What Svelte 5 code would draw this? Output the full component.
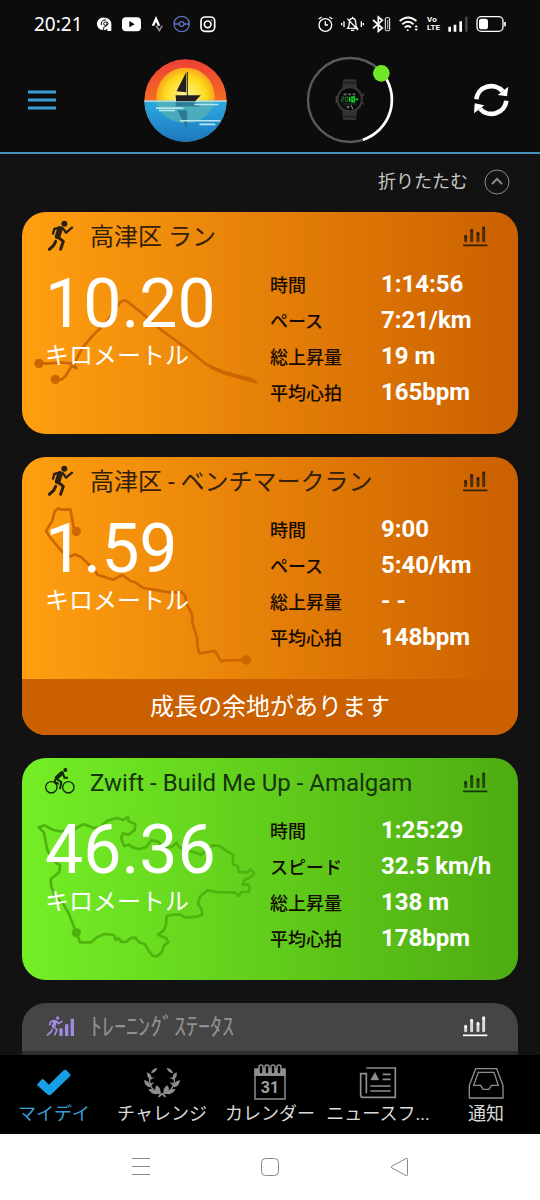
<script lang="ts">
	type Activity = {
		sport: 'run' | 'ride';
		title: string;
		distance: string;
		unit: string;
		stats: [string, string][];
		routeBox: string;
		route: string[];
		dots: [number, number][];
		note?: string;
	};

	const activities: Activity[] = [
		{
			sport: 'run',
			title: '高津区 ラン',
			distance: '10.20',
			unit: 'キロメートル',
			stats: [
				['時間', '1:14:56'],
				['ペース', '7:21/km'],
				['総上昇量', '19 m'],
				['平均心拍', '165bpm']
			],
			routeBox: '36 21 744 666',
			route: [
				'M87 475L120 475L150 472L190 476L200 490L184 482',
				'M136 523H156L166 514L184 484L194 474L216 430L246 394L292 348L324 302L334 289L345 286L354 291L400 328L450 372L530 430L588 478L640 500L700 517L722 521L738 531L700 522L640 504L600 486'
			],
			dots: [[87, 475], [136, 523]]
		},
		{
			sport: 'run',
			title: '高津区 - ベンチマークラン',
			distance: '1.59',
			unit: 'キロメートル',
			stats: [
				['時間', '9:00'],
				['ペース', '5:40/km'],
				['総上昇量', '- -'],
				['平均心拍', '148bpm']
			],
			routeBox: '36 21 744 666',
			route: [
				'M199 244L191 232L181 178L154 179L145 175L134 184L127 212L108 244L122 264L156 305L180 320L194 313L212 320L236 343L250 354L262 374L310 389L337 375L362 393L376 397L400 414L480 427L516 426L526 438L530 462L546 492L548 522L561 562L563 592L568 610L615 603L634 635L642 631L709 630'
			],
			dots: [[199, 244], [709, 630]],
			note: '成長の余地があります'
		},
		{
			sport: 'ride',
			title: 'Zwift - Build Me Up - Amalgam',
			distance: '46.36',
			unit: 'キロメートル',
			stats: [
				['時間', '1:25:29'],
				['スピード', '32.5 km/h'],
				['総上昇量', '138 m'],
				['平均心拍', '178bpm']
			],
			routeBox: '36 24 744 666',
			route: [
				'M199 548L206 566L210 577H244L262 561L284 552L312 555L318 570L326 565L334 576L350 575L362 564L376 563L388 577L404 582L416 602L428 618H442L456 606L461 588L475 576L468 564L444 554L460 542L468 524L470 498L492 494L512 494L526 503L560 500L576 494L574 476L564 462L570 440L592 421L620 426L676 428L686 438L694 426L716 426L720 414L716 404L698 404L704 390L730 376L732 366L720 358L712 368L686 365L684 350L668 342L670 314L650 304L630 288L606 286L590 300L574 314L540 302L508 292L500 278L486 290L460 292L446 276L424 270L410 290L388 298L368 292L356 284L342 288L334 266L338 250L356 254L374 240L376 222L356 214L354 200L340 210L320 204L292 212L270 232L252 234L222 223L206 230L190 240L152 244L130 240L104 226L86 232L102 248L112 300L128 330L150 346L148 366L122 388L124 410L136 440L160 462L176 490Z'
			],
			dots: [[199, 548]]
		}
	];

	const tabs = [
		{ id: 'day', label: 'マイデイ' },
		{ id: 'challenge', label: 'チャレンジ' },
		{ id: 'calendar', label: 'カレンダー' },
		{ id: 'news', label: 'ニュースフ...' },
		{ id: 'inbox', label: '通知' }
	];

	let current = $state('day');
</script>

{#snippet chartIcon()}
	<svg width="26" height="26" viewBox="608 57 78 78" aria-hidden="true">
		<path d="M611 121h73" stroke="currentColor" stroke-width="5" />
		<path d="M619 107V94M637 107V76M656 107V85M673 107V68" stroke="currentColor" stroke-width="9" stroke-linecap="round" opacity="0.8" />
		<path d="M619 96v-1M637 78v-1M656 87v-1M673 70v-1" stroke="currentColor" stroke-width="8" stroke-linecap="round" />
	</svg>
{/snippet}

<div class="app">
	<div class="status">
		<span class="clock">20:21</span>
		<div class="status-icons">
			<svg width="14" height="18" viewBox="290 45 42 54">
				<path d="M310 53a19 19 0 0 1 20 19v21h-12v-7a19 19 0 1 1-8-33z" fill="#fff" />
				<g fill="none" stroke="#0c0c0c" stroke-width="3">
					<circle cx="312" cy="71" r="5" />
					<path d="M300 75a12 12 0 0 1 14-15M305 92l4-13M317 65a8 8 0 0 1 0 12l-7 2" />
				</g>
			</svg>
			<svg width="19" height="18" viewBox="360 45 57 54">
				<rect x="360" y="52" width="57" height="42" rx="12" fill="#fff" />
				<path d="M382 63v19l16-9z" fill="#0c0c0c" />
			</svg>
			<svg width="12" height="18" viewBox="447 45 36 54">
				<path d="M449 77l13-29 13 29h-8l-5-12-5 12z" fill="#fff" />
				<path d="M460 77h6l6 11 6-11h5l-11 19z" fill="#999" />
			</svg>
			<svg width="17" height="18" viewBox="519 45 51 54" fill="none" stroke="#5d71bd" stroke-width="4">
				<circle cx="545" cy="72" r="23" />
				<circle cx="545" cy="72" r="7" />
				<path d="M522 72h16M552 72h16" />
			</svg>
			<svg width="16" height="18" viewBox="599 45 48 54" fill="none" stroke="#fff" stroke-width="5">
				<rect x="602" y="51" width="41" height="43" rx="12" />
				<circle cx="622" cy="73" r="10" />
				<circle cx="634" cy="61" r="1" stroke-width="3" />
			</svg>
		</div>
		<div class="status-icons system">
			<svg width="15" height="18" viewBox="144 45 45 54" fill="none" stroke="#fff" stroke-width="4">
				<circle cx="166" cy="75" r="19" />
				<path d="M166 64v11h8M146 57l9-6M178 51l9 6" />
			</svg>
			<svg width="23" height="18" viewBox="213 45 69 54" fill="none" stroke="#fff" stroke-width="4">
				<path d="M233 85h29c-4-5-5-8-5-17 0-8-3-13-9-13s-10 5-10 13c0 9-1 12-5 17zM248 50v5M243 91h10M232 56l32 34M215 69v7M222 64v17M274 64v17M280 69v7" />
			</svg>
			<svg width="19" height="18" viewBox="307 45 57 54" fill="none" stroke="#fff" stroke-width="5">
				<path d="M310 60l28 24-12 10V51l12 10-28 24" />
				<rect x="347" y="53" width="13" height="39" rx="3" stroke-width="3" />
				<path d="M354 59v28" stroke="#999" stroke-width="4" />
			</svg>
			<svg width="20" height="18" viewBox="392 45 62 54" fill="none" stroke="#fff" stroke-width="6">
				<path d="M394 63q26-23 52 0M402 73q18-16 35 0M410 83q10-9 19 0" />
				<circle cx="419" cy="91" r="3" fill="#fff" stroke="none" />
				<path d="M440 82l5-7 6 7zM440 87l5 7 6-7z" fill="#fff" stroke="none" />
			</svg>
			<span class="volte">Vo<br />LTE</span>
			<svg width="20" height="18" viewBox="534 45 60 54" stroke-width="8">
				<path d="M539 95V80M555 95V74M572 95V64" stroke="#fff" />
				<path d="M589 95V50" stroke="#444" />
			</svg>
			<svg width="30" height="18" viewBox="618 45 90 54">
				<rect x="621" y="50" width="78" height="44" rx="13" fill="none" stroke="#fff" stroke-width="4" />
				<rect x="627" y="56" width="27" height="32" rx="8" fill="#fff" />
				<path d="M705 66v13" stroke="#fff" stroke-width="5" />
			</svg>
		</div>
	</div>

	<header class="topbar">
		<button class="menu" aria-label="メニュー">
			<svg width="28" height="20" viewBox="0 0 28 20" stroke="#3a9fd3" stroke-width="3">
				<path d="M0 2h28M0 10h28M0 18h28" />
			</svg>
		</button>
		<button aria-label="プロフィール">
			<svg width="83" height="83" viewBox="431 177 250 250">
				<defs>
					<linearGradient id="sky" x1="0" y1="0" x2="0" y2="1">
						<stop offset="0" stop-color="#ee4035" />
						<stop offset="0.5" stop-color="#f46d22" />
					</linearGradient>
					<radialGradient id="sun">
						<stop offset="0" stop-color="#fff3a0" />
						<stop offset="0.7" stop-color="#fddb1a" />
						<stop offset="1" stop-color="#f9a51e" />
					</radialGradient>
					<linearGradient id="sea" x1="0" y1="0" x2="0" y2="1">
						<stop offset="0" stop-color="#2cabe0" />
						<stop offset="1" stop-color="#1d76be" />
					</linearGradient>
				</defs>
				<circle cx="556" cy="302" r="124" fill="url(#sky)" />
				<circle cx="556" cy="291" r="88" fill="url(#sun)" />
				<path d="M432 303h248a124 124 0 0 1-248 0z" fill="url(#sea)" />
				<path d="M469 306h174a88 75 0 0 1-174 0z" fill="#67b9a5" opacity="0.55" />
				<path d="M432 304h248" stroke="#cde7e6" stroke-width="4" />
				<path d="M558 217v60l-29-3z M526 286h34v-70h3v70h39l-17 18h-57z" fill="#231f20" />
				<path d="M526 307h57l18 13h-74zM531 331h30v55q-7-7-10-18z" fill="#236c88" opacity="0.75" />
				<path d="M467 325h83M476 332h48M583 314h72M540 363h121M598 374h48" stroke="#b9e4ef" stroke-width="5" />
			</svg>
		</button>
		<button aria-label="デバイス">
			<svg width="86" height="86" viewBox="108 173 258 258">
				<circle cx="237" cy="302" r="126" fill="none" stroke="#5b5b5b" stroke-width="7" />
				<path d="M333 220A126 126 0 0 1 276 421" fill="none" stroke="#fff" stroke-width="8" />
				<path d="M217 240h38l4 32h-46zM213 330h46l-4 32h-38z" fill="#303132" />
				<path d="M219 250h34M219 352h34" stroke="#1d1e1f" stroke-width="4" />
				<circle cx="236" cy="300" r="40" fill="#353637" />
				<circle cx="236" cy="300" r="33" fill="#090909" />
				<path d="M196 290v20M275 282l3 8M275 310l3 6" stroke="#444" stroke-width="4" />
				<path d="M218 285h9M232 285h8M245 285h8" stroke="#686868" stroke-width="5" />
				<path d="M211 293h7v7h-7v7h7M224 293h6v14h-7v-14" fill="none" stroke="#2c6a32" stroke-width="3" />
				<path d="M236 293v14M243 293h7v14h-7zM254 300h8" fill="none" stroke="#16cf28" stroke-width="5" />
				<path d="M214 314h44" stroke="#2c6a32" stroke-width="2" />
				<path d="M226 322h9l-5 6M241 317l4 13" fill="none" stroke="#8b8b8b" stroke-width="3" />
				<circle cx="331" cy="222" r="25" fill="#70e727" />
			</svg>
		</button>
		<button aria-label="同期">
			<svg width="36" height="36" viewBox="609 248 108 108">
				<path d="M619 300a45 44 0 0 1 79-24M709 304a45 44 0 0 1-79 24" fill="none" stroke="#fff" stroke-width="14" />
				<path d="M715 262l-4 29-28-4zM612 342l2-30 29 6z" fill="#fff" />
			</svg>
		</button>
	</header>

	<main>
		<div class="fold">
			<button>
				折りたたむ
				<svg width="26" height="26" viewBox="0 0 26 26" fill="none" stroke="#8b8b8b">
					<circle cx="13" cy="13" r="12" />
					<path d="M8 15l5-5 5 5" stroke-width="2" />
				</svg>
			</button>
		</div>

		<div class="cards">
			{#each activities as activity}
				<article class="card {activity.sport}">
					<svg class="route" width="248" height="222" viewBox={activity.routeBox} aria-hidden="true">
						{#each activity.route as d}
							<path {d} fill="none" stroke="currentColor" stroke-width="8" stroke-linejoin="round" />
						{/each}
						{#each activity.dots as [cx, cy]}
							<circle {cx} {cy} r="14" fill="currentColor" />
						{/each}
					</svg>
					<div class="head">
						{#if activity.sport === 'run'}
							<svg width="32" height="32" viewBox="102 48 96 96" fill="none" stroke="#2b2113" stroke-linejoin="round" stroke-linecap="round">
								<circle cx="163" cy="56" r="9" fill="#2b2113" stroke="none" />
								<path d="M150 72L143 94" stroke-width="17" />
								<path d="M148 68L133 72L129 86M159 70L168 83L186 68" stroke-width="7" />
								<path d="M145 97L160 109L152 133M137 109L131 121L118 133" stroke-width="9" />
							</svg>
						{:else}
							<svg width="32" height="32" viewBox="102 51 96 96" fill="none" stroke="#10270b" stroke-linejoin="round">
								<circle cx="124" cy="112" r="17" stroke-width="4" />
								<circle cx="175" cy="112" r="17" stroke-width="4" />
								<circle cx="166" cy="60" r="6" fill="#10270b" stroke="none" />
								<path d="M156 69L140 83" stroke-width="12" stroke-linecap="round" />
								<path d="M138 86L154 96L150 117M136 88L134 96L146 102M159 71L163 83H174" stroke-width="6" />
							</svg>
						{/if}
						<h2>{activity.title}</h2>
						<button aria-label="グラフ">{@render chartIcon()}</button>
					</div>
					<div class="body">
						<div class="distance">
							<span class="number">{activity.distance}</span>
							<span class="unit">{activity.unit}</span>
						</div>
						<dl>
							{#each activity.stats as [name, value]}
								<dt>{name}</dt>
								<dd>{value}</dd>
							{/each}
						</dl>
					</div>
					{#if activity.note}
						<p class="note">{activity.note}</p>
					{/if}
				</article>
			{/each}

			<article class="card training">
				<div class="head">
					<svg width="32" height="32" viewBox="132 63 96 96" fill="none" stroke="#a18be0" stroke-linecap="round" stroke-linejoin="round">
						<circle cx="173" cy="84" r="5" fill="#a18be0" stroke="none" />
						<path d="M165 95L161 109" stroke-width="11" />
						<path d="M163 92L152 95L149 104M170 94L176 101L186 94M162 112L171 119L165 134M157 118L153 126L142 135" stroke-width="5" />
						<path d="M183 138V115M200 138V103M217 138V86" stroke-width="10" stroke-linecap="butt" />
					</svg>
					<h2>ﾄﾚｰﾆﾝｸﾞｽﾃｰﾀｽ</h2>
					<button aria-label="グラフ">{@render chartIcon()}</button>
				</div>
				<div class="training-body"></div>
			</article>
		</div>
	</main>

	<nav class="tabs">
		{#each tabs as tab}
			<button class:active={current === tab.id} onclick={() => (current = tab.id)}>
				{#if tab.id === 'day'}
					<svg width="36" height="36" viewBox="111 222 108 108">
						<path d="M115 283l12-14q4-4 8 0l15 15 44-43q4-4 8 0l11 11q3 4 0 7l-55 53q-7 7-14 0l-28-25q-3-2-1-4z" fill="#18a0e6" />
					</svg>
				{:else if tab.id === 'challenge'}
					<svg width="36" height="36" viewBox="432 222 108 108" fill="#8e8e8e">
						{#each [0, 1] as side}
							<g transform={side ? 'translate(972 0) scale(-1 1)' : undefined}>
								<path d="M472 233q-17 3-19 17q15-2 19-17zM442 247q-3 16 10 22l14-8q-8 2-11 2q-3-13-13-16zM432 271q2 18 17 21l14-15q-9 0-14 5q-5-11-17-11zM445 298q10 17 26 14l11-2q1-16-12-24q-6 6-4 16q-8-7-21-4z" />
								<path d="M450 257q-8 42 34 56l-8 8" fill="none" stroke="#8e8e8e" stroke-width="4" />
							</g>
						{/each}
						<path d="M476 320l10-9 10 9" fill="none" stroke="#8e8e8e" stroke-width="5" />
					</svg>
				{:else if tab.id === 'calendar'}
					<svg width="36" height="36" viewBox="0 0 36 36">
						<path d="M3 5h30v30H3z" fill="none" stroke="#8e8e8e" stroke-width="1.5" />
						<path d="M2.5 5h31v7h-31z" fill="#8e8e8e" />
						<g fill="#000" stroke="#8e8e8e" stroke-width="1.5">
							<rect x="7" y="1" width="4" height="9" rx="2" />
							<rect x="13" y="1" width="4" height="9" rx="2" />
							<rect x="19" y="1" width="4" height="9" rx="2" />
							<rect x="25" y="1" width="4" height="9" rx="2" />
						</g>
						<text x="18" y="29" text-anchor="middle" class="date">31</text>
					</svg>
				{:else if tab.id === 'news'}
					<svg width="36" height="36" viewBox="270 222 108 108" fill="none" stroke="#8e8e8e" stroke-width="5">
						<path d="M289 234h87v88H279q-7 0-7-8V251h17v59" />
						<path d="M338 253h24M338 268h24M301 288h61M301 303h61" />
						<path d="M315 247l12 23h-25z" fill="#8e8e8e" stroke-width="1" />
					</svg>
				{:else}
					<svg width="36" height="36" viewBox="594 222 108 108" fill="none" stroke="#8e8e8e" stroke-width="4">
						<path d="M617 236h63l19 50v38H598v-38z" />
						<path d="M625 247h47l13 39h-21l-7 12h-18l-7-12h-21z" />
					</svg>
				{/if}
				<span>{tab.label}</span>
			</button>
		{/each}
	</nav>

	<div class="android">
		<button aria-label="履歴">
			<svg width="20" height="20" viewBox="0 0 20 20" stroke="#888">
				<path d="M1 1.500h18M1 9.500h18M1 17.500h18" />
			</svg>
		</button>
		<button aria-label="ホーム">
			<svg width="20" height="20" viewBox="0 0 20 20" fill="none" stroke="#888">
				<rect x="1.500" y="1.500" width="17" height="17" rx="4" />
			</svg>
		</button>
		<button aria-label="戻る">
			<svg width="20" height="20" viewBox="0 0 20 20" fill="none" stroke="#888">
				<path d="M17 1.500q1.500-.5 1.500 1v15q0 1.500-1.500 1l-14-7.500q-1.500-1 0-2z" />
			</svg>
		</button>
	</div>
</div>

<style>
	:global(body) {
		background: #121212;
	}

	.app {
		display: flex;
		flex-direction: column;
		height: 100vh;
		background: #121212;
		color: #fff;
		font-family: Roboto, 'Noto Sans CJK JP', sans-serif;
	}

	button {
		padding: 0;
		border: 0;
		background: none;
		color: inherit;
		font: inherit;
		cursor: pointer;
	}

	svg {
		display: block;
		flex-shrink: 0;
		overflow: visible;
	}

	.status {
		display: flex;
		align-items: center;
		height: 48px;
		padding: 0 34px;
		background: #0c0c0c;
		flex-shrink: 0;
	}

	.clock {
		font-family: 'Noto Sans', sans-serif;
		font-size: 19px;
		margin-right: 15px;
	}

	.status-icons {
		display: flex;
		align-items: center;
		gap: 10px;
	}

	.system {
		gap: 8px;
		margin-left: auto;
	}

	.volte {
		font-size: 8px;
		font-weight: 700;
		line-height: 8px;
	}

	.topbar {
		display: flex;
		align-items: center;
		justify-content: space-between;
		height: 104px;
		padding: 0 31px 0 28px;
		background: #0c0c0c;
		border-bottom: 2px solid #4793bd;
		flex-shrink: 0;
	}

	.menu {
		width: 36px;
	}

	main {
		flex: 1;
		min-height: 0;
		overflow: hidden auto;
		scrollbar-width: none;
	}

	.fold {
		display: flex;
		justify-content: flex-end;
		padding: 15px 30px 17px;
	}

	.fold button {
		display: flex;
		align-items: center;
		gap: 16px;
		font-size: 18px;
		line-height: 26px;
		color: #c4c4c4;
	}

	.cards {
		display: flex;
		flex-direction: column;
		gap: 23px;
		padding: 0 22px;
	}

	.card {
		position: relative;
		border-radius: 24px;
		overflow: hidden;
	}

	.run {
		background: linear-gradient(to right, #ff9f10, #cb6000);
	}

	.ride {
		background: linear-gradient(to right, #74ee26, #4eac11);
	}

	.route {
		position: absolute;
		top: 0;
		left: 0;
		color: #cd6500;
	}

	.ride .route {
		color: #4fb30f;
	}

	.head {
		position: relative;
		display: flex;
		align-items: center;
		gap: 14px;
		height: 50px;
		padding: 0 30px 0 22px;
		color: #33200a;
	}

	.ride .head {
		color: #17340d;
	}

	h2 {
		flex: 1;
		min-width: 0;
		margin: 0;
		font-size: 24px;
		font-weight: 400;
		line-height: 32px;
		white-space: nowrap;
	}

	.body {
		position: relative;
		display: grid;
		grid-template-columns: 1fr 1fr;
		padding: 4px 0 24px;
	}

	.distance {
		display: flex;
		flex-direction: column;
		padding-left: 23px;
	}

	.number {
		font-size: 68px;
		line-height: 76px;
	}

	.unit {
		font-size: 24px;
		font-weight: 400;
		line-height: 28px;
	}

	dl {
		display: grid;
		grid-template-columns: 111px 1fr;
		grid-auto-rows: 36px;
		align-items: center;
		margin: 0;
		white-space: nowrap;
	}

	dt {
		font-size: 18px;
		font-weight: 500;
		color: #160b02;
	}

	dd {
		margin: 0;
		font-size: 24px;
		font-weight: 700;
	}

	.note {
		position: relative;
		margin: 0;
		background: #ca6000;
		font-size: 24px;
		line-height: 56px;
		text-align: center;
	}

	.training {
		background: #454545;
	}

	.training .head {
		height: 48px;
		color: #fff;
	}

	.training h2 {
		color: #919191;
	}

	.training-body {
		height: 120px;
		background: #2d2d2d;
	}

	.tabs {
		display: grid;
		grid-template-columns: repeat(5, 1fr);
		background: #000;
		flex-shrink: 0;
	}

	.tabs button {
		display: flex;
		flex-direction: column;
		align-items: center;
		gap: 1px;
		padding: 9px 0 7px;
		font-size: 18px;
		line-height: 26px;
		color: #dadada;
		white-space: nowrap;
	}

	.tabs .active {
		color: #3a9fd8;
	}

	.date {
		font-size: 16px;
		font-weight: 700;
		fill: #a0a0a0;
	}

	.android {
		display: flex;
		justify-content: center;
		align-items: center;
		gap: 109px;
		height: 66px;
		background: #fff;
		flex-shrink: 0;
	}
</style>
